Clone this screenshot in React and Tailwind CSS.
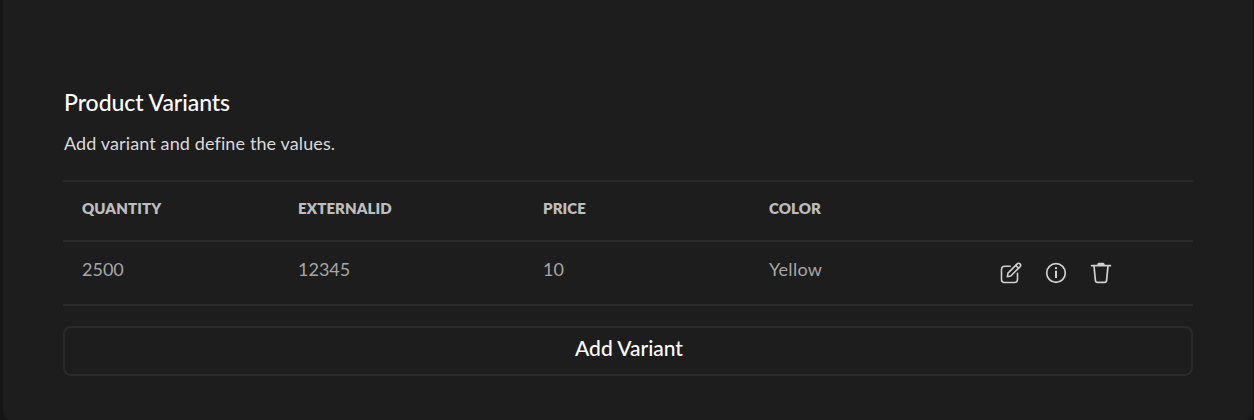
const columns = "grid grid-cols-[216px_245px_226px_231px_1fr] pl-[19px]";

function EditIcon() {
  return (
    <svg width="22" height="22" viewBox="0 0 22 22" fill="none" stroke="currentColor" strokeWidth="1.6" strokeLinecap="round" strokeLinejoin="round">
      <path d="M10.2 4.3H4.5a3 3 0 0 0-3 3v10.2a3 3 0 0 0 3 3h10a3 3 0 0 0 3-3v-6.2" />
      <path d="M7.3 14.8l.7-3.7 9.2-9.2a1.9 1.9 0 0 1 2.8 2.8l-9.2 9.3z" />
      <path d="M15.8 3.4l2.8 2.8" />
    </svg>
  );
}

function InfoIcon() {
  return (
    <svg width="22" height="22" viewBox="0 0 22 22" fill="none" stroke="currentColor" strokeWidth="1.7">
      <circle cx="11" cy="11" r="9.3" />
      <path d="M11 8.7v7.4" strokeWidth="2" />
      <circle cx="11" cy="6.1" r="1.2" fill="currentColor" stroke="none" />
    </svg>
  );
}

function TrashIcon() {
  return (
    <svg width="22" height="22" viewBox="0 0 22 22" fill="none" stroke="currentColor" strokeWidth="1.7" strokeLinecap="round" strokeLinejoin="round">
      <path d="M1.6 3.7h18.8" />
      <path d="M7 3.4l.7-1.9q.3-.8 1.1-.8h4.4q.8 0 1.1.8l.7 1.9z" fill="currentColor" stroke="none" />
      <path d="M4 4l1.4 14.3a2.2 2.2 0 0 0 2.2 2.1h6.8a2.2 2.2 0 0 0 2.2-2.1L18 4" />
    </svg>
  );
}

export default function App() {
  return (
    <div className="h-[420px] bg-[#151515] pl-[3px] pr-px font-['Lato',sans-serif]">
      <main className="flex h-full flex-col rounded-b-lg bg-[#1d1d1d] pl-[60px] pr-[60px] pt-[87px]">
        <h1 className="h-[30px] pl-px text-[23px] leading-[30px] font-medium tracking-[-0.05px] text-white"><span>Product Variants</span></h1>
        <p className="mt-[14px] h-6 pl-px text-[18px] leading-6 tracking-[0.12px] text-[#dadada]"><span>Add variant and define the values.</span></p>
        <section className="mt-[25px] border-y-2 border-[#2a2a2a]">
          <div className={`${columns} h-[58px] pt-[16px] text-[15px] leading-5 font-extrabold tracking-[0.1px] text-[#bdbdbd]`}>
            <div><span>QUANTITY</span></div>
            <div><span>EXTERNALID</span></div>
            <div><span>PRICE</span></div>
            <div><span>COLOR</span></div>
          </div>
          <div className={`${columns} h-16 border-t-2 border-[#2a2a2a] pt-[15px] text-[18px] leading-6 text-[#a6a6a6]`}>
            <div><span>2500</span></div>
            <div><span>12345</span></div>
            <div><span>10</span></div>
            <div><span className="tracking-[0.3px]">Yellow</span></div>
            <div className="flex gap-[23px] pt-[5px] text-[#d0d0d0]">
              <EditIcon />
              <InfoIcon />
              <TrashIcon />
            </div>
          </div>
        </section>
        <button className="mt-5 h-[50px] w-full rounded-lg border-2 border-[#2a2a2a] pb-[6px] pl-[2px] text-[21px] leading-8 font-medium text-white"><span>Add Variant</span></button>
      </main>
    </div>
  );
}
